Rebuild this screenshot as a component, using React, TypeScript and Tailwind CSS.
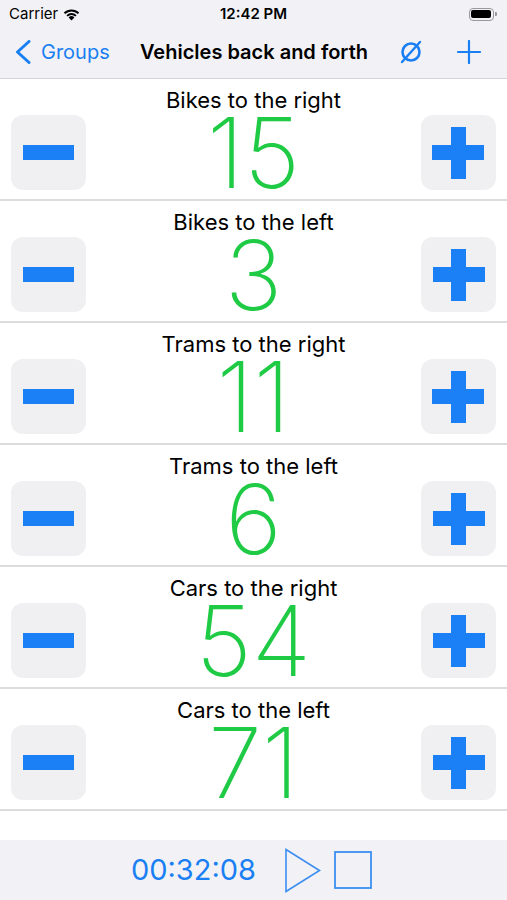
import React from "react";

type Counter = {
  label: string;
  value: number;
};

const counters: Counter[] = [
  { label: "Bikes to the right", value: 15 },
  { label: "Bikes to the left", value: 3 },
  { label: "Trams to the right", value: 11 },
  { label: "Trams to the left", value: 6 },
  { label: "Cars to the right", value: 54 },
  { label: "Cars to the left", value: 71 },
];

const font = { fontFamily: "Inter, 'Liberation Sans', sans-serif" };

function StatusBar() {
  return (
    <div className="flex h-[28px] items-center justify-between px-[9px] text-[15px] text-black">
      <div className="flex w-[120px] items-center gap-[5px]">
        <span>Carrier</span>
        <svg width="17" height="13" viewBox="0 0 17 13">
          <path d="M8.5 12.5 L5.6 9.4 A4.2 4.2 0 0 1 11.4 9.4 Z" fill="#000" />
          <path d="M3.4 7.2 A7.3 7.3 0 0 1 13.6 7.2 L12.2 8.6 A5.3 5.3 0 0 0 4.8 8.6 Z" fill="#000" />
          <path d="M0.8 4.6 A11 11 0 0 1 16.2 4.6 L14.8 6 A9 9 0 0 0 2.2 6 Z" fill="#000" />
        </svg>
      </div>
      <span className="font-semibold">12:42 PM</span>
      <div className="flex w-[120px] justify-end pr-[1px]">
        <div className="flex items-center">
          <div className="flex h-[13px] w-[25px] items-center rounded-[4px] border border-[#9a9a9e] p-[1.5px]">
            <div className="h-full w-full rounded-[2px] bg-black" />
          </div>
          <div className="ml-[1px] h-[4px] w-[2px] rounded-r-[1px] bg-[#9a9a9e]" />
        </div>
      </div>
    </div>
  );
}

function NavBar() {
  return (
    <div className="flex h-[50px] items-center pl-[15px] pr-[14px] pb-[2px]">
      <div className="flex w-[112px] items-center gap-[10px] text-[20px] text-[#1a7ff2]">
        <svg width="16" height="24" viewBox="0 0 16 24">
          <path d="M14 1.5 L2.5 12 L14 22.5" fill="none" stroke="#1a7ff2" strokeWidth="3" strokeLinecap="round" strokeLinejoin="round" />
        </svg>
        <span>Groups</span>
      </div>
      <div className="flex-1 text-center text-[20px] font-semibold text-black">Vehicles back and forth</div>
      <div className="flex w-[112px] items-center justify-end gap-[34px] pr-[12px]">
        <svg width="24" height="26" viewBox="0 0 24 26">
          <ellipse cx="12" cy="13" rx="8.5" ry="8.5" fill="none" stroke="#1a7ff2" strokeWidth="2.6" />
          <path d="M3 23 L21 3" stroke="#1a7ff2" strokeWidth="2.4" strokeLinecap="round" />
        </svg>
        <svg width="24" height="24" viewBox="0 0 24 24">
          <path d="M12 1 V23 M1 12 H23" stroke="#1a7ff2" strokeWidth="2.2" strokeLinecap="round" />
        </svg>
      </div>
    </div>
  );
}

function CounterRow({ label, value }: Counter) {
  return (
    <div className="flex h-[122px] flex-col border-b-2 border-[#dcdcde] px-[11px] pt-[8px]">
      <div className="text-center text-[22px] leading-[26px] text-black">{label}</div>
      <div className="mt-[2px] flex items-center justify-between">
        <button type="button" className="flex h-[75px] w-[75px] items-center justify-center rounded-[12px] bg-[#f0f0f2]">
          <div className="h-[15px] w-[51px] bg-[#1b7ff5]" />
        </button>
        <div className="flex h-[75px] items-center overflow-visible">
          <span className="text-[97px] font-[150] leading-[75px] text-[#1fca45]">{value}</span>
        </div>
        <button type="button" className="relative flex h-[75px] w-[75px] items-center justify-center rounded-[12px] bg-[#f0f0f2]">
          <div className="absolute h-[15px] w-[52px] bg-[#1b7ff5]" />
          <div className="absolute h-[52px] w-[15px] bg-[#1b7ff5]" />
        </button>
      </div>
    </div>
  );
}

export default function App() {
  return (
    <div className="flex h-[900px] w-[507px] flex-col bg-white" style={font}>
      <div className="border-b border-[#d4d4d8] bg-[#f2f2f6]">
        <StatusBar />
        <NavBar />
      </div>
      {counters.map((c) => (
        <CounterRow key={c.label} label={c.label} value={c.value} />
      ))}
      <div className="flex-1" />
      <div className="flex h-[60px] items-center justify-center gap-[28px] bg-[#f2f2f6] pr-[4px]">
        <span className="text-[29px] text-[#1a7ff2]">00:32:08</span>
        <div className="flex items-center gap-[12px]">
          <svg width="38" height="45" viewBox="0 0 38 45">
            <path d="M2 1.5 L35.5 22.5 L2 43.5 Z" fill="none" stroke="#3b8ef0" strokeWidth="1.6" strokeLinejoin="miter" />
          </svg>
          <svg width="38" height="38" viewBox="0 0 38 38">
            <rect x="1" y="1" width="36" height="36" fill="none" stroke="#3b8ef0" strokeWidth="1.8" />
          </svg>
        </div>
      </div>
    </div>
  );
}
